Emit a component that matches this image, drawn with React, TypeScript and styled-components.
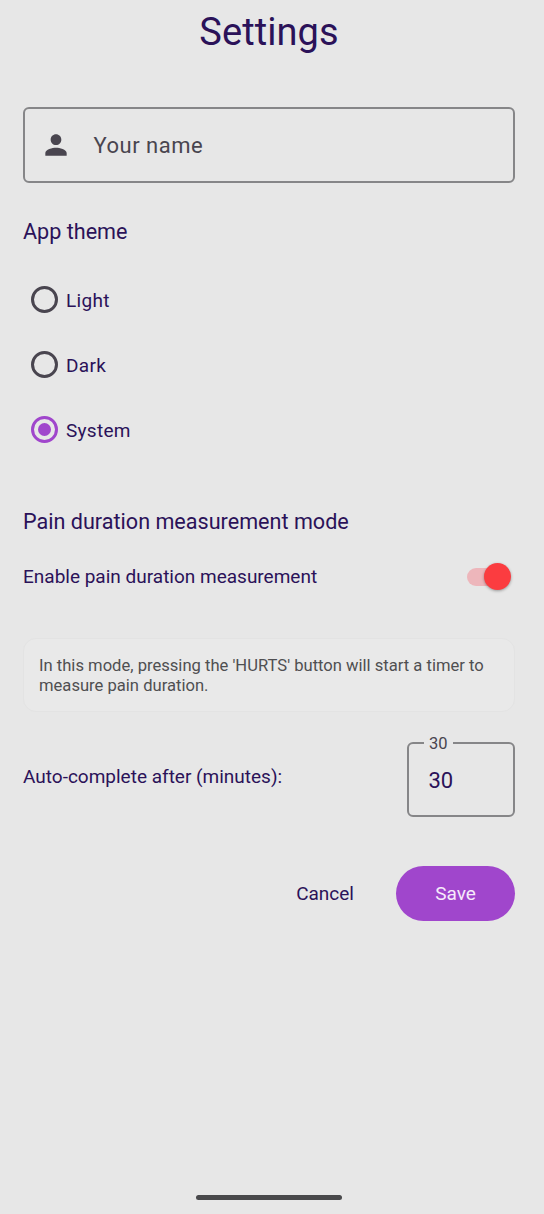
import React, { useState } from "react"
import styled, { createGlobalStyle } from "styled-components"

const GlobalStyle = createGlobalStyle`
  html, body {
    background-color: #e7e7e7;
    margin: 0;
    padding: 0;
  }
  * {
    box-sizing: border-box;
  }
`
const Screen = styled.main`
  background-color: #e7e7e7;
  color: #2b1259;
  display: flex;
  flex-direction: column;
  font-family: Roboto, "Liberation Sans", sans-serif;
  height: 1214px;
  padding: 8px 29px 0 23px;
  position: relative;
  width: 544px;
`
const Title = styled.h1`
  font-size: 38px;
  font-weight: 400;
  letter-spacing: 0.1px;
  line-height: 48px;
  margin: 0 0 51px;
  text-align: center;
`
const NameField = styled.label`
  align-items: center;
  border: 2px solid #868688;
  border-radius: 6px;
  display: flex;
  height: 76px;
  padding-left: 15px;
`
const NamePlaceholder = styled.span`
  color: #49454f;
  font-size: 22px;
  letter-spacing: 0.5px;
  margin-left: 21.5px;
`
const SectionTitle = styled.h2<{ $gap: number }>`
  font-size: 21.6px;
  font-weight: 400;
  line-height: 28px;
  margin: ${({ $gap }) => $gap}px 0 0;
`
const RadioGroup = styled.div`
  display: flex;
  flex-direction: column;
  gap: 25px;
  margin-top: 34px;
  padding-left: 8px;
`
const RadioRow = styled.button`
  align-items: center;
  background: none;
  border: none;
  color: inherit;
  cursor: pointer;
  display: flex;
  font-family: inherit;
  gap: 8px;
  height: 40px;
  padding: 0;
`
const RadioCircle = styled.span<{ $checked: boolean }>`
  align-items: center;
  border: 3.5px solid ${({ $checked }) => ($checked ? "#a046cc" : "#49454f")};
  border-radius: 50%;
  display: flex;
  height: 27px;
  justify-content: center;
  margin-top: -1px;
  width: 27px;
`
const RadioDot = styled.span`
  background-color: #a046cc;
  border-radius: 50%;
  height: 13px;
  width: 13px;
`
const RadioLabel = styled.span`
  font-size: 19px;
  letter-spacing: 0.3px;
`
const SwitchRow = styled.div`
  align-items: center;
  display: flex;
  justify-content: space-between;
  margin-top: 29px;
`
const SwitchLabel = styled.span`
  font-size: 19px;
`
const SwitchTrack = styled.span`
  background-color: #edb6bb;
  border-radius: 9px;
  display: block;
  height: 18px;
  margin-right: 4px;
  position: relative;
  width: 44px;
`
const SwitchThumb = styled.span`
  background-color: #fb3c40;
  border-radius: 50%;
  box-shadow: 0 1px 3px rgba(0, 0, 0, 0.35);
  height: 27px;
  position: absolute;
  right: 0;
  top: -5px;
  width: 27px;
`
const InfoBox = styled.div`
  background-color: #e9e9e9;
  border: 1px solid #e3e3e3;
  border-radius: 13px;
  color: #4f4f51;
  font-size: 16.6px;
  height: 74px;
  line-height: 20px;
  margin-top: 50px;
  padding: 17px 15px 0;
`
const AutoRow = styled.div`
  align-items: center;
  display: flex;
  justify-content: space-between;
  margin-top: 30px;
`
const AutoLabel = styled.span`
  font-size: 19px;
  margin-top: -6px;
`
const NumberField = styled.div`
  align-items: center;
  border: 2px solid #868688;
  border-radius: 6px;
  display: flex;
  font-size: 22px;
  height: 75px;
  padding: 2px 0 0 19.5px;
  position: relative;
  width: 108px;
`
const FloatingLabel = styled.span`
  background-color: #e7e7e7;
  color: #49454f;
  font-size: 16.5px;
  left: 15px;
  line-height: 18px;
  padding: 0 5px;
  position: absolute;
  top: -9px;
`
const Actions = styled.div`
  align-items: center;
  display: flex;
  gap: 42px;
  justify-content: flex-end;
  margin-top: 49px;
`
const CancelButton = styled.button`
  background: none;
  border: none;
  color: inherit;
  font-family: inherit;
  font-size: 19px;
  padding: 0;
`
const SaveButton = styled.button`
  background-color: #a046cc;
  border: none;
  border-radius: 28px;
  color: #f6ebfb;
  font-family: inherit;
  font-size: 19px;
  height: 55px;
  width: 119px;
`
const HomeBar = styled.div`
  background-color: #49494b;
  border-radius: 3px;
  bottom: 14px;
  height: 5px;
  left: 196px;
  position: absolute;
  width: 146px;
`

const themes = ["Light", "Dark", "System"]

const PersonIcon = () => (
  <svg width="32" height="32" viewBox="0 0 24 24" fill="#49454f">
    <path d="M12 12c2.21 0 4-1.79 4-4s-1.79-4-4-4-4 1.79-4 4 1.79 4 4 4zm0 2c-2.67 0-8 1.34-8 4v2h16v-2c0-2.66-5.33-4-8-4z" />
  </svg>
)

const App = () => {
  const [theme, setTheme] = useState("System")

  return (
    <Screen>
      <GlobalStyle />
      <Title>Settings</Title>
      <NameField>
        <PersonIcon />
        <NamePlaceholder>Your name</NamePlaceholder>
      </NameField>
      <SectionTitle $gap={35}>App theme</SectionTitle>
      <RadioGroup>
        {themes.map(name => (
          <RadioRow key={name} onClick={() => setTheme(name)}>
            <RadioCircle $checked={theme === name}>
              {theme === name && <RadioDot />}
            </RadioCircle>
            <RadioLabel>{name}</RadioLabel>
          </RadioRow>
        ))}
      </RadioGroup>
      <SectionTitle $gap={58}>Pain duration measurement mode</SectionTitle>
      <SwitchRow>
        <SwitchLabel>Enable pain duration measurement</SwitchLabel>
        <SwitchTrack>
          <SwitchThumb />
        </SwitchTrack>
      </SwitchRow>
      <InfoBox>
        In this mode, pressing the 'HURTS' button will start a timer to measure
        pain duration.
      </InfoBox>
      <AutoRow>
        <AutoLabel>Auto-complete after (minutes):</AutoLabel>
        <NumberField>
          <FloatingLabel>30</FloatingLabel>
          30
        </NumberField>
      </AutoRow>
      <Actions>
        <CancelButton>Cancel</CancelButton>
        <SaveButton>Save</SaveButton>
      </Actions>
      <HomeBar />
    </Screen>
  )
}

export default App
